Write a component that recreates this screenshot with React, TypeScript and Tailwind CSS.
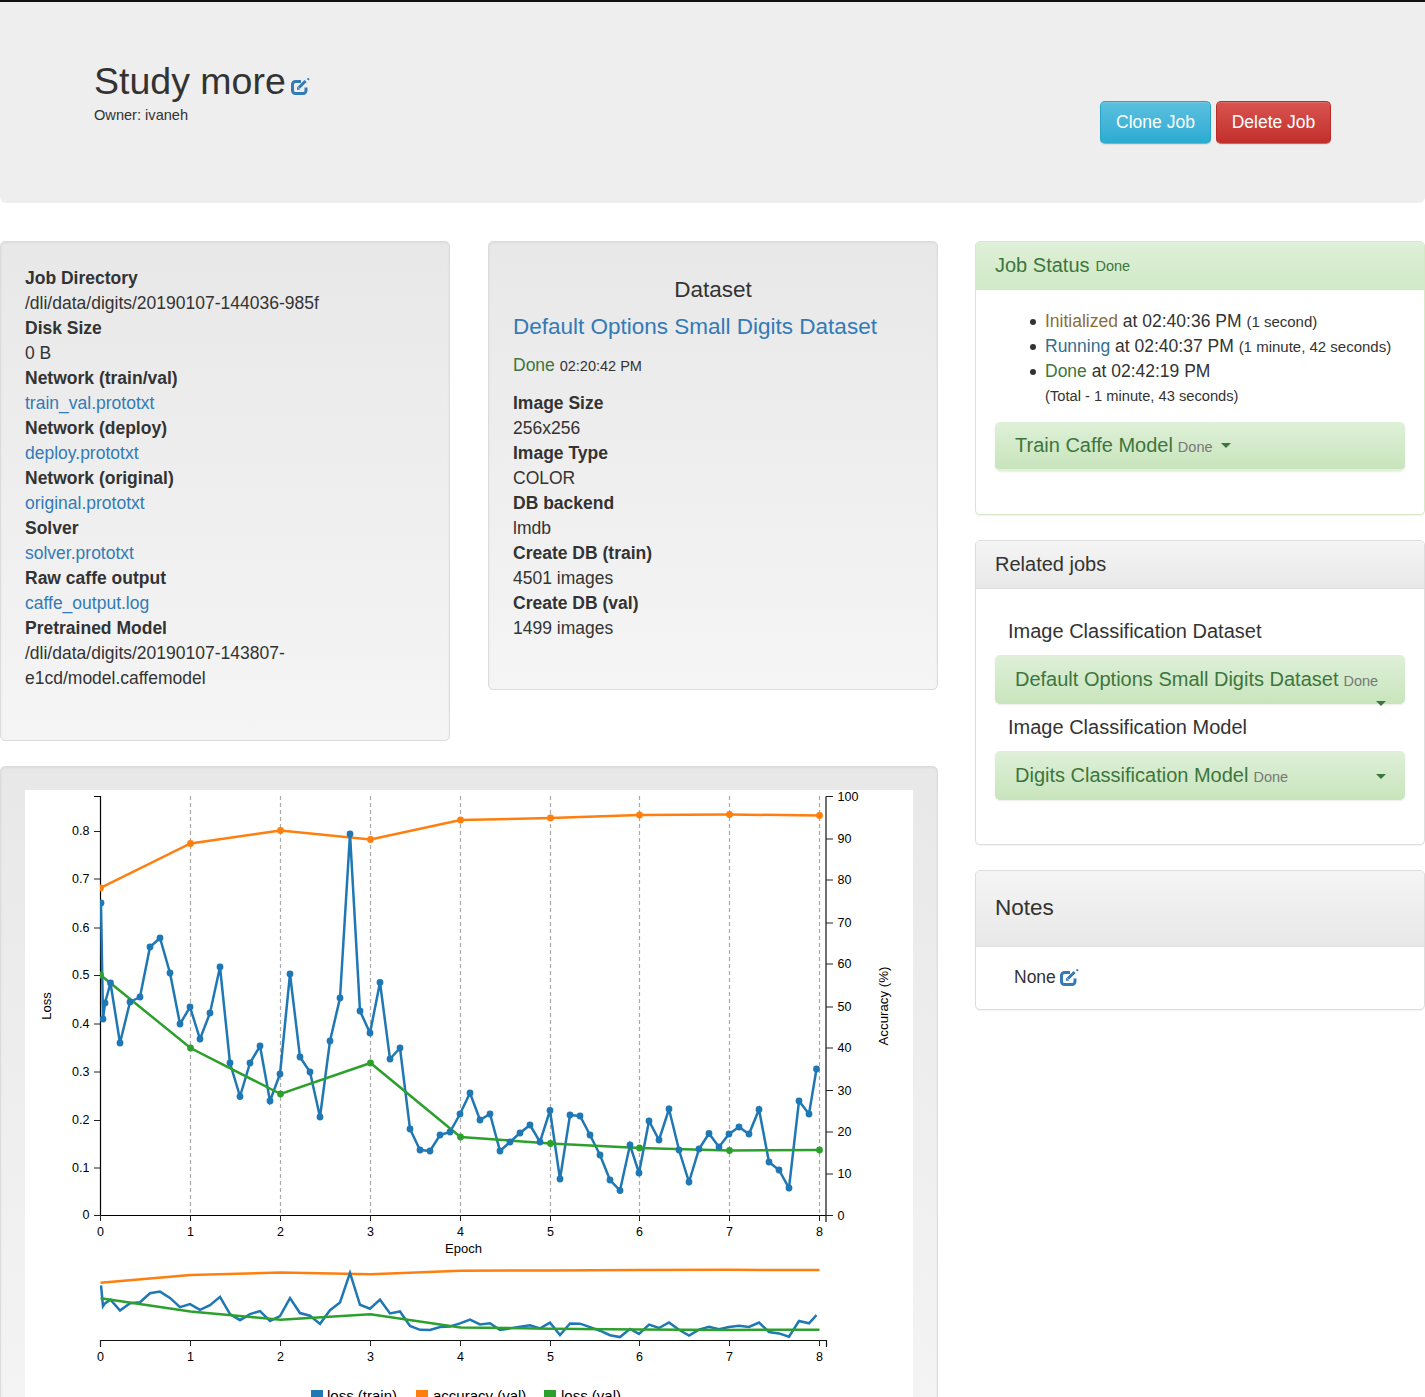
const BLUE: [number, number][] = [
  [101, 903], [103, 1019], [105, 1003], [110.5, 983], [120, 1043], [130, 1002], [140, 997], [150, 947], [160, 938], [170, 973],
  [180, 1024], [190, 1007], [200, 1039], [210, 1013], [220, 967], [230, 1063], [240, 1096.5], [250, 1063], [260, 1046], [270, 1101],
  [280, 1074], [290, 974], [300, 1057], [310, 1072], [320, 1117], [330, 1041], [340, 998], [350, 834], [360, 1011], [370, 1033],
  [380, 982.5], [390, 1059], [400, 1048], [410, 1129], [420, 1150], [430, 1151], [440, 1135], [450, 1132], [460, 1114], [470, 1093],
  [480, 1120], [490, 1114], [500, 1151], [510, 1142], [520, 1133], [530, 1125], [540, 1142], [550, 1110.5], [560, 1179], [570, 1115],
  [580, 1116], [590, 1135], [600, 1155], [610, 1180], [620, 1190.5], [630, 1145], [639, 1173], [649, 1121], [659, 1140], [669, 1109],
  [679, 1150], [689, 1182], [699, 1149], [709, 1133.5], [719, 1147], [729, 1134], [739, 1127], [749, 1134], [759, 1109.5], [769, 1162],
  [779, 1170], [789, 1188], [799, 1101], [809, 1114], [816.5, 1069],
];
const ORANGE: [number, number][] = [
  [100.5, 888], [190.5, 843.5], [280.5, 830.5], [370.5, 839.5], [460.5, 820], [550.5, 818], [639.5, 815], [729.5, 814.5], [819.5, 815.5],
];
const GREEN: [number, number][] = [
  [100.5, 975], [190.5, 1048], [280.5, 1094], [370.5, 1063], [460.5, 1137], [550.5, 1143.5], [639.5, 1148], [729.5, 1150.5], [819.5, 1150],
];
const EPOCHS = [100.5, 190.5, 280.5, 370.5, 460.5, 550.5, 639.5, 729.5, 819.5];
const LOSS_TICKS: [string, number][] = [
  ['0.8', 831.5], ['0.7', 879], ['0.6', 928], ['0.5', 975.5], ['0.4', 1024], ['0.3', 1072], ['0.2', 1120.5], ['0.1', 1168], ['0', 1215.5],
];
const ACC_TICKS: [string, number][] = [
  ['100', 796.5], ['90', 839], ['80', 880], ['70', 923], ['60', 964], ['50', 1007], ['40', 1048], ['30', 1090.5], ['20', 1132], ['10', 1174], ['0', 1215.5],
];

const line = (pts: [number, number][]) => pts.map(([x, y]) => `${x},${y}`).join(' ');
const miniLoss = (pts: [number, number][]) => pts.map(([x, y]) => [x, 1298.3 + (y - 975) * 0.18] as [number, number]);
const miniAcc = (pts: [number, number][]) => pts.map(([x, y]) => [x, 1270 + (y - 815.5) * 0.175] as [number, number]);

const DOT = 'relative before:absolute before:left-[-15px] before:top-[10px] before:w-[6px] before:h-[6px] before:rounded-full before:bg-[#333]';

function EditIcon({ className }: { className: string }) {
  return (
    <svg viewBox="0 0 19 17" className={className} fill="none" stroke="#337ab7" strokeWidth="3">
      <path d="M15 9.500v3a3 3 0 0 1-3 3H4.500a3 3 0 0 1-3-3V6.500a3 3 0 0 1 3-3H10" />
      <path d="M7.800 9.800l6.800-6.800" />
      <path d="M6 8.600v3.200h3.200z" fill="#337ab7" stroke="none" />
      <path d="M16.600 1.800l1.300-1.300" strokeWidth="2.200" />
    </svg>
  );
}

function Field({ label, value, href }: { label: string; value: React.ReactNode; href?: boolean }) {
  return (
    <>
      <div className="font-bold">{label}</div>
      <div className={href ? 'text-[#337ab7]' : ''}>{value}</div>
    </>
  );
}

function Caret() {
  return <span className="inline-block w-0 h-0 border-x-[5px] border-x-transparent border-t-[5px] border-t-[#3c763d]" />;
}

function JobBar({ name, caretBelow }: { name: string; caretBelow?: boolean }) {
  return (
    <div className="relative h-[49px] px-5 rounded-[5px] flex items-center bg-gradient-to-b from-[#dff0d8] to-[#c8e5bc] shadow-[0_1px_2px_rgba(0,0,0,0.075)] text-[20px] text-[#3c763d] whitespace-nowrap">
      {name}
      <span className="ml-[5px] mt-[3px] text-[14.5px] text-[#777]">Done</span>
      <span className={caretBelow ? 'absolute right-[19px] top-[46px] flex' : 'absolute right-[19px] top-[23px] flex'}>
        <Caret />
      </span>
    </div>
  );
}

function Panel({ title, tone, children, className }: { title: React.ReactNode; tone: 'success' | 'plain'; children: React.ReactNode; className: string }) {
  const success = tone === 'success';
  return (
    <section className={`bg-white border rounded-[5px] shadow-[0_1px_1px_rgba(0,0,0,0.05)] overflow-hidden ${success ? 'border-[#d6e9c6]' : 'border-[#ddd]'} ${className}`}>
      {title}
      {children}
    </section>
  );
}

function Chart() {
  return (
    <svg viewBox="25 790 888 607" className="block w-[888px] h-[607px] font-['Liberation_Sans',Arial,sans-serif]">
      <defs>
        <clipPath id="plot">
          <rect x={100} y={796} width={727} height={420} />
        </clipPath>
        <clipPath id="mini">
          <rect x={100} y={1267} width={727} height={73} />
        </clipPath>
      </defs>

      {EPOCHS.slice(1).map((x) => (
        <line key={x} x1={x} x2={x} y1={796} y2={1215} stroke="#aaa" strokeWidth="1.200" strokeDasharray="4 3" />
      ))}

      {/* axes */}
      <path d="M94 796.500H100.500V1215.500H826.500" fill="none" stroke="#000" strokeWidth="1.200" />
      <path d="M826 796.500V1222" stroke="#333" strokeWidth="1.400" fill="none" />
      {LOSS_TICKS.map(([label, y]) => (
        <g key={label}>
          <line x1={94} x2={100} y1={y} y2={y} stroke="#222" />
          <text x={89.500} y={y + 3.500} textAnchor="end" fontSize="12.500" fill="#000">{label}</text>
        </g>
      ))}
      {ACC_TICKS.map(([label, y]) => (
        <g key={label}>
          <line x1={826} x2={833} y1={y} y2={y} stroke="#222" />
          <text x={837.500} y={y + 4} fontSize="12.500" fill="#000">{label}</text>
        </g>
      ))}
      {EPOCHS.map((x, i) => (
        <g key={x}>
          <line x1={x} x2={x} y1={1215} y2={1221} stroke="#222" />
          <text x={x} y={1235.500} textAnchor="middle" fontSize="12.500" fill="#000">{i}</text>
        </g>
      ))}
      <text x={463.500} y={1253} textAnchor="middle" fontSize="13" fill="#000">Epoch</text>
      <text transform="translate(51 1006) rotate(-90)" textAnchor="middle" fontSize="13" fill="#000">Loss</text>
      <text transform="translate(888 1006) rotate(-90)" textAnchor="middle" fontSize="13.300" fill="#000">Accuracy (%)</text>

      {/* main series */}
      <g clipPath="url(#plot)">
        <polyline points={line(ORANGE)} fill="none" stroke="#ff7f0e" strokeWidth="2.500" />
        <polyline points={line(BLUE)} fill="none" stroke="#1f77b4" strokeWidth="2.500" />
        <polyline points={line(GREEN)} fill="none" stroke="#2ca02c" strokeWidth="2.500" />
        {ORANGE.map(([x, y]) => <circle key={x} cx={x} cy={y} r="3.400" fill="#ff7f0e" />)}
        {BLUE.map(([x, y]) => <circle key={x} cx={x} cy={y} r="3.400" fill="#1f77b4" />)}
        {GREEN.map(([x, y]) => <circle key={x} cx={x} cy={y} r="3.400" fill="#2ca02c" />)}
      </g>

      {/* subchart */}
      <g clipPath="url(#mini)">
        <polyline points={line(miniAcc(ORANGE))} fill="none" stroke="#ff7f0e" strokeWidth="2.500" />
        <polyline points={line(miniLoss(BLUE))} fill="none" stroke="#1f77b4" strokeWidth="2.500" />
        <polyline points={line(miniLoss(GREEN))} fill="none" stroke="#2ca02c" strokeWidth="2.500" />
      </g>
      <path d="M100.500 1347V1340.500H826.500V1347" fill="none" stroke="#111" strokeWidth="1.200" />
      {EPOCHS.map((x, i) => (
        <g key={x}>
          <line x1={x} x2={x} y1={1340} y2={1346} stroke="#222" />
          <text x={x} y={1360.500} textAnchor="middle" fontSize="12.500" fill="#000">{i}</text>
        </g>
      ))}

      {/* legend */}
      <rect x={311} y={1390} width={12} height={12} fill="#1f77b4" />
      <text x={327} y={1401} fontSize="15" fill="#000">loss (train)</text>
      <rect x={416} y={1390} width={12} height={12} fill="#ff7f0e" />
      <text x={433} y={1401} fontSize="15" fill="#000">accuracy (val)</text>
      <rect x={544} y={1390} width={12} height={12} fill="#2ca02c" />
      <text x={561} y={1401} fontSize="15" fill="#000">loss (val)</text>
    </svg>
  );
}

const WELL = 'border border-[#dcdcdc] rounded-[5px] bg-gradient-to-b from-[#e8e8e8] to-[#f5f5f5] shadow-[inset_0_1px_3px_rgba(0,0,0,0.05),0_1px_0_rgba(255,255,255,0.1)]';

export default function App() {
  return (
    <div className="h-[1397px] overflow-hidden bg-white border-t-2 border-[#111] text-[17.500px] leading-[25px] text-[#333] font-['Liberation_Sans',Arial,sans-serif]">
      <header className="h-[201px] bg-[#eee] rounded-b-[6px] flex justify-between pl-[94px] pr-[94px]">
        <div className="pt-[56px]">
          <h1 className="flex items-end text-[37.500px] leading-[46px]">
            Study more
            <EditIcon className="w-[19px] h-[17px] ml-[5px] mb-[9px]" />
          </h1>
          <p className="text-[14.600px] leading-[20px] mt-[1px]">Owner: ivaneh</p>
        </div>
        <div className="flex gap-[5px] pt-[99px]">
          <button className="h-[43px] w-[111px] rounded-[5px] border border-[#28a4c9] border-b-[#5cbcd9] bg-gradient-to-b from-[#5bc0de] to-[#2aabd2] text-white shadow-[inset_0_1px_0_rgba(255,255,255,0.15),0_1px_1px_rgba(0,0,0,0.075)]">Clone Job</button>
          <button className="h-[43px] w-[115px] rounded-[5px] border border-[#b92c28] border-b-[#d4605c] bg-gradient-to-b from-[#d9534f] to-[#c12e2a] text-white shadow-[inset_0_1px_0_rgba(255,255,255,0.15),0_1px_1px_rgba(0,0,0,0.075)]">Delete Job</button>
        </div>
      </header>

      <main className="flex justify-between pt-[38px]">
        <div className="w-[938px]">
          <div className="flex justify-between items-start">
            <div className={`${WELL} w-[450px] h-[500px] pt-[24px] pl-[24px] pr-[20px]`}>
              <Field label="Job Directory" value="/dli/data/digits/20190107-144036-985f" />
              <Field label="Disk Size" value="0 B" />
              <Field label="Network (train/val)" value="train_val.prototxt" href />
              <Field label="Network (deploy)" value="deploy.prototxt" href />
              <Field label="Network (original)" value="original.prototxt" href />
              <Field label="Solver" value="solver.prototxt" href />
              <Field label="Raw caffe output" value="caffe_output.log" href />
              <Field label="Pretrained Model" value={<>/dli/data/digits/20190107-143807-<br />e1cd/model.caffemodel</>} />
            </div>
            <div className={`${WELL} w-[450px] h-[449px] pt-[35px] pl-[24px] pr-[20px]`}>
              <h4 className="text-center text-[22.500px] leading-[25px] -ml-[4px]">Dataset</h4>
              <h3 className="mt-[12px] text-[22.500px] leading-[26px] text-[#337ab7] whitespace-nowrap">Default Options Small Digits Dataset</h3>
              <p className="mt-[13px] text-[#3c763d]">
                Done <span className="text-[14.500px] text-[#333]">02:20:42 PM</span>
              </p>
              <div className="mt-[12px]">
                <Field label="Image Size" value="256x256" />
                <Field label="Image Type" value="COLOR" />
                <Field label="DB backend" value="lmdb" />
                <Field label="Create DB (train)" value="4501 images" />
                <Field label="Create DB (val)" value="1499 images" />
              </div>
            </div>
          </div>
          <div className={`${WELL} mt-[25px] h-[700px] pt-[23px] pl-[24px]`}>
            <div className="w-[888px] bg-white">
              <Chart />
            </div>
          </div>
        </div>

        <aside className="w-[450px]">
          <Panel
            tone="success"
            className="h-[274px]"
            title={
              <div className="h-[48px] px-[19px] pb-[2px] flex items-center bg-gradient-to-b from-[#dff0d8] to-[#d0e9c6] text-[20px] text-[#3c763d]">
                Job Status <span className="ml-[6px] mt-[3px] text-[14.500px]">Done</span>
              </div>
            }
          >
            <div className="px-[19px] pt-[19px]">
              <ul className="pl-[50px]">
                <li className={`h-[25px] ${DOT}`}><span className="text-[#8a6d3b]">Initialized</span> at 02:40:36 PM <small className="text-[15px]">(1 second)</small></li>
                <li className={`h-[25px] ${DOT}`}><span className="text-[#31708f]">Running</span> at 02:40:37 PM <small className="text-[15px]">(1 minute, 42 seconds)</small></li>
                <li className={`h-[25px] ${DOT}`}><span className="text-[#3c763d]">Done</span> at 02:42:19 PM</li>
                <li className="h-[25px] text-[14.700px]">(Total - 1 minute, 43 seconds)</li>
              </ul>
              <div className="mt-[13px] h-[49px] px-5 rounded-[5px] flex items-center bg-gradient-to-b from-[#dff0d8] to-[#c8e5bc] border-b-2 border-[#e2f0db] shadow-[0_1px_2px_rgba(0,0,0,0.075)] text-[20px] text-[#3c763d]">
                Train Caffe Model
                <span className="ml-[5px] mt-[3px] text-[14.500px] text-[#777]">Done</span>
                <span className="ml-[8px] flex"><Caret /></span>
              </div>
            </div>
          </Panel>

          <Panel
            tone="plain"
            className="mt-[25px] h-[305px]"
            title={
              <div className="h-[48px] px-[19px] flex items-center border-b border-[#ddd] bg-gradient-to-b from-[#f5f5f5] to-[#e8e8e8] text-[20px]">
                Related jobs
              </div>
            }
          >
            <div className="px-[19px] pt-[30px] text-[20px]">
              <div className="pl-[13px] leading-[25px] mb-[11px]">Image Classification Dataset</div>
              <JobBar name="Default Options Small Digits Dataset" caretBelow />
              <div className="pl-[13px] leading-[25px] mt-[11px] mb-[11px]">Image Classification Model</div>
              <JobBar name="Digits Classification Model" />
            </div>
          </Panel>

          <Panel
            tone="plain"
            className="mt-[25px] h-[140px]"
            title={
              <div className="h-[76px] px-[19px] pb-[2px] flex items-center border-b-2 border-[#e4e4e4] bg-gradient-to-b from-[#f5f5f5] to-[#e8e8e8] text-[22.500px]">
                Notes
              </div>
            }
          >
            <div className="pt-[18px] pl-[38px] flex items-center">
              None
              <EditIcon className="w-[19px] h-[17px] ml-[4px]" />
            </div>
          </Panel>
        </aside>
      </main>
    </div>
  );
}
